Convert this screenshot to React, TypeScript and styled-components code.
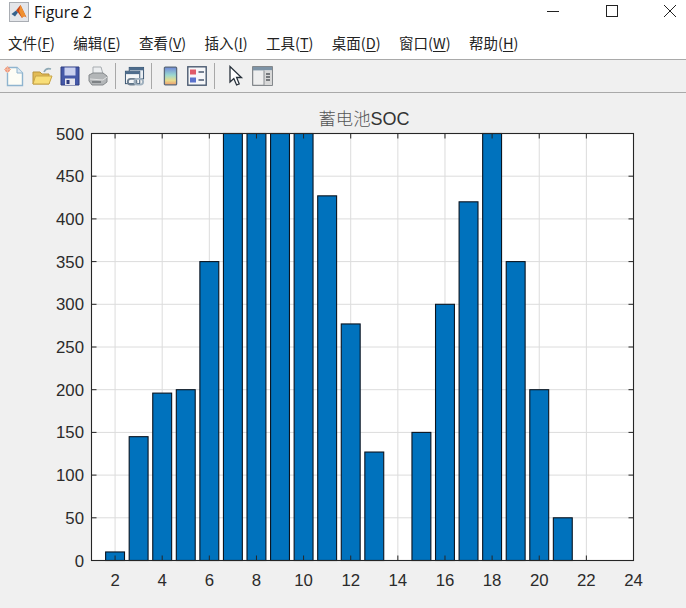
import React from "react";
import styled, { createGlobalStyle } from "styled-components";

const Global = createGlobalStyle`
  html, body { margin: 0; padding: 0; background: #f0f0f0; }
  #root { width: 686px; height: 608px; overflow: hidden; }
`;

const Window = styled.div`
  width: 686px;
  height: 608px;
  display: flex;
  flex-direction: column;
  background: #f0f0f0;
  font-family: "Noto Sans CJK SC", "Liberation Sans", sans-serif;
  color: #1a1a1a;
`;

const TitleBar = styled.div`
  height: 24px;
  flex: none;
  display: flex;
  align-items: center;
  background: #fff;
  padding: 0 10px 4px 9px;
`;

const TitleText = styled.span`
  margin-left: 5px;
  font: 15.5px "Open Sans", sans-serif;
  color: #111;
  flex: 1;
`;

const WinButton = styled.button`
  width: 12px;
  height: 12px;
  padding: 0;
  margin: 0 0 2px 46.5px;
  border: 0;
  background: none;
  display: flex;
  align-items: center;
  justify-content: center;
`;

const MenuBar = styled.div`
  height: 30px;
  flex: none;
  display: flex;
  align-items: center;
  gap: 18.4px;
  padding: 0 0 1px 8px;
  background: #fff;
  border-bottom: 1px solid #a9a9a9;
`;

const MenuItem = styled.span`
  font-size: 14.5px;
  line-height: 20px;
  color: #222;
  white-space: nowrap;
  u { text-underline-offset: 2px; }
`;

const ToolBar = styled.div`
  height: 32px;
  flex: none;
  display: flex;
  align-items: center;
  padding-left: 3px;
  background: #f0f0f0;
  border-bottom: 1px solid #a9a9a9;
`;

const ToolIcon = styled.span<{ $w?: number; $ml?: number }>`
  width: ${(p) => p.$w ?? 22}px;
  height: 24px;
  margin-left: ${(p) => p.$ml ?? 6}px;
  flex: none;
  display: flex;
  align-items: center;
  justify-content: center;
`;

const Sep = styled.span<{ $ml: number }>`
  width: 1px;
  height: 26px;
  margin-left: ${(p) => p.$ml}px;
  background: #a8a8a8;
  flex: none;
`;

const Figure = styled.div`
  flex: 1;
  min-height: 0;
  background: #f0f0f0;
`;

const ChartSvg = styled.svg`
  display: block;
`;

const TickLabel = styled.text`
  font: 16.8px "Liberation Sans", sans-serif;
  fill: #2b2b2b;
`;

const ChartTitle = styled.text`
  font: 18px "Liberation Sans", "Noto Sans CJK SC", sans-serif;
  fill: #333;
`;

const CjkSpan = styled.tspan`
  font: 300 17.3px "Noto Sans CJK SC", sans-serif;
  fill: #555;
`;

const menus = [
  ["文件", "F"],
  ["编辑", "E"],
  ["查看", "V"],
  ["插入", "I"],
  ["工具", "T"],
  ["桌面", "D"],
  ["窗口", "W"],
  ["帮助", "H"],
];

const values = [10, 145, 196, 200, 350, 500, 500, 500, 500, 427, 277, 127, 0, 150, 300, 420, 500, 350, 200, 50];

// plot area, in svg coordinates (the svg starts under the toolbar)
const TOP_OFFSET = 93;
const left = 91.5;
const right = 633.5;
const top = 133.5 - TOP_OFFSET;
const bottom = 560.5 - TOP_OFFSET;
const xAt = (v: number) => left + ((v - 1) / 23) * (right - left);
const yAt = (v: number) => bottom - (v / 500) * (bottom - top);
const xTicks = [2, 4, 6, 8, 10, 12, 14, 16, 18, 20, 22, 24];
const yTicks = [0, 50, 100, 150, 200, 250, 300, 350, 400, 450, 500];

const Chart = () => (
  <ChartSvg width={686} height={515} viewBox="0 0 686 515">
    <ChartTitle x={364} y={32} textAnchor="middle">
      <CjkSpan>蓄电池</CjkSpan>SOC
    </ChartTitle>
    <rect x={left} y={top} width={right - left} height={bottom - top} fill="#fff" />
    {xTicks.map((t) => (
      <line key={t} x1={xAt(t)} x2={xAt(t)} y1={top} y2={bottom} stroke="#dcdcdc" />
    ))}
    {yTicks.map((t) => (
      <line key={t} x1={left} x2={right} y1={yAt(t)} y2={yAt(t)} stroke="#dcdcdc" />
    ))}
    {values.map((v, i) =>
      v > 0 ? (
        <rect
          key={i}
          x={xAt(i + 2) - 9.45}
          y={yAt(v)}
          width={18.9}
          height={bottom - yAt(v)}
          fill="#0072bd"
          stroke="#0a1420"
          strokeWidth={1.1}
        />
      ) : null
    )}
    {xTicks.map((t) => (
      <g key={t} stroke="#262626">
        <line x1={xAt(t)} x2={xAt(t)} y1={bottom} y2={bottom - 5} />
        <line x1={xAt(t)} x2={xAt(t)} y1={top} y2={top + 5} />
      </g>
    ))}
    {yTicks.map((t) => (
      <g key={t} stroke="#262626">
        <line x1={left} x2={left + 5} y1={yAt(t)} y2={yAt(t)} />
        <line x1={right} x2={right - 5} y1={yAt(t)} y2={yAt(t)} />
      </g>
    ))}
    <rect x={left} y={top} width={right - left} height={bottom - top} fill="none" stroke="#262626" strokeWidth={1.1} />
    {xTicks.map((t) => (
      <TickLabel key={t} x={xAt(t)} y={bottom + 25} textAnchor="middle">
        {t}
      </TickLabel>
    ))}
    {yTicks.map((t) => (
      <TickLabel key={t} x={84} y={yAt(t) + 6} textAnchor="end">
        {t}
      </TickLabel>
    ))}
  </ChartSvg>
);

const MatlabLogo = () => (
  <svg width="20" height="20" viewBox="0 0 20 20">
    <rect x="0.5" y="0.5" width="19" height="19" fill="#e4e6ea" stroke="#a9adb3" />
    <path d="M2.5 12 L7 8.5 L9 10.5 L6 14.5 Z" fill="#35618c" />
    <path d="M7 8.5 L11.5 3 Q14 8 17.5 15.5 Q14.5 13 13 16 L9 10.5 Z" fill="#c9481a" />
    <path d="M11.5 3 L10 9 L13 16 Q14.5 13 17.5 15.5 Q14 8 11.5 3 Z" fill="#ef9030" />
  </svg>
);

const NewIcon = () => (
  <svg width="22" height="22" viewBox="0 0 22 22">
    <path d="M4.5 2.5 H14 L19.5 8 V20.5 H4.5 Z" fill="#fdfdf6" stroke="#8fb4cf" strokeWidth="1.4" />
    <path d="M14 2.5 V8 H19.5" fill="#dfeaf2" stroke="#8fb4cf" />
    <circle cx="4.5" cy="4.5" r="2.6" fill="#ef9b7f" />
    <path d="M1 4.5 H8 M4.5 1 V8" stroke="#f4b79e" />
  </svg>
);

const OpenIcon = () => (
  <svg width="22" height="22" viewBox="0 0 22 22">
    <path d="M2 7 H9 L11 9 H18 V19 H2 Z" fill="#e2bb55" stroke="#b7933c" />
    <path d="M2 19 L4.5 11 H21 L18 19 Z" fill="#f8de78" stroke="#c9a548" />
    <path d="M13 7 Q15 2.5 20 4" fill="none" stroke="#8fa9b5" strokeWidth="1.6" />
  </svg>
);

const SaveIcon = () => (
  <svg width="20" height="20" viewBox="0 0 20 20">
    <path d="M1 1 H19 V19 H1 Z" fill="#4458a8" stroke="#2f3c80" />
    <rect x="4.5" y="1.5" width="11" height="8" fill="#c9d0ef" />
    <rect x="5" y="12.5" width="10" height="6.5" fill="#e6e6ee" />
    <rect x="6.5" y="14" width="3" height="4" fill="#2f3c80" />
  </svg>
);

const PrintIcon = () => (
  <svg width="20" height="20" viewBox="0 0 20 20">
    <path d="M5 1 H13 L15 8 H5 Z" fill="#eceef0" stroke="#a7acb0" />
    <path d="M1 9 L5 7 H15 L19 10 V16 L15 19 H4 L1 15 Z" fill="#b3b6b8" stroke="#85898c" />
    <path d="M2 13 L15 14 L19 11" fill="none" stroke="#e2e3e4" />
    <rect x="4" y="15" width="9" height="2" fill="#7e8285" />
  </svg>
);

const LinkIcon = () => (
  <svg width="21" height="21" viewBox="0 0 22 22">
    <rect x="5.5" y="1.5" width="15" height="12" fill="#e9eef3" stroke="#37536f" />
    <rect x="5.5" y="1.5" width="15" height="3" fill="#4d6c8c" />
    <rect x="1.5" y="5.5" width="15" height="13" fill="#f4f6f8" stroke="#37536f" />
    <rect x="1.5" y="5.5" width="15" height="3" fill="#4d6c8c" />
    <rect x="4" y="13.5" width="9" height="6" rx="3" fill="none" stroke="#6d7f90" strokeWidth="2" />
    <rect x="11" y="13.5" width="9" height="6" rx="3" fill="none" stroke="#9fb0be" strokeWidth="2" />
  </svg>
);

const ColorbarIcon = () => (
  <svg width="15" height="22" viewBox="0 0 16 22">
    <defs>
      <linearGradient id="cb" x1="0" y1="0" x2="0" y2="1">
        <stop offset="0" stopColor="#6f86d8" />
        <stop offset="0.45" stopColor="#9ad8d0" />
        <stop offset="0.75" stopColor="#e8dc8c" />
        <stop offset="1" stopColor="#ee9a6c" />
      </linearGradient>
    </defs>
    <rect x="1.5" y="1.5" width="13" height="19" rx="1" fill="url(#cb)" stroke="#5a6a7c" strokeWidth="1.4" />
  </svg>
);

const LegendIcon = () => (
  <svg width="20" height="20" viewBox="0 0 20 20">
    <rect x="0.8" y="0.8" width="18.4" height="18.4" fill="#f6f7f9" stroke="#4a5a70" strokeWidth="1.4" />
    <rect x="3" y="3.5" width="6" height="5" fill="#df5a68" />
    <rect x="3" y="11.5" width="6" height="5" fill="#5b72cc" />
    <path d="M11.5 6 H17 M11.5 14 H17" stroke="#4a5a70" strokeWidth="1.6" />
  </svg>
);

const CursorIcon = () => (
  <svg width="16" height="22" viewBox="0 0 16 22">
    <path d="M2 1.5 V17 L5.8 13.5 L8.6 20 L11.2 18.8 L8.6 12.5 H13.5 Z" fill="#fff" stroke="#27303a" strokeWidth="1.3" />
  </svg>
);

const PanelIcon = () => (
  <svg width="21" height="20" viewBox="0 0 21 20">
    <rect x="0.7" y="0.7" width="19.6" height="18.6" fill="#eeeeee" stroke="#6a6f74" />
    <rect x="1" y="1" width="19" height="3.4" fill="#7d93a6" />
    <rect x="12" y="4.4" width="8" height="14.6" fill="#d8d8d8" />
    <path d="M14 8 H18 M14 11 H18 M14 14 H18" stroke="#55595d" strokeWidth="1.3" />
    <path d="M12 4.4 V19" stroke="#8a8e92" />
  </svg>
);

export default function App() {
  return (
    <Window>
      <Global />
      <TitleBar>
        <MatlabLogo />
        <TitleText>Figure 2</TitleText>
        <WinButton aria-label="minimize">
          <svg width="12" height="12" viewBox="0 0 12 12">
            <path d="M0 6.5 H12" stroke="#222" />
          </svg>
        </WinButton>
        <WinButton aria-label="maximize">
          <svg width="12" height="12" viewBox="0 0 12 12">
            <rect x="0.5" y="0.5" width="11" height="11" fill="none" stroke="#222" />
          </svg>
        </WinButton>
        <WinButton aria-label="close">
          <svg width="12" height="12" viewBox="0 0 12 12">
            <path d="M0 0 L12 12 M12 0 L0 12" stroke="#222" />
          </svg>
        </WinButton>
      </TitleBar>
      <MenuBar>
        {menus.map(([name, key]) => (
          <MenuItem key={key}>
            {name}(<u>{key}</u>)
          </MenuItem>
        ))}
      </MenuBar>
      <ToolBar>
        <ToolIcon $ml={0}><NewIcon /></ToolIcon>
        <ToolIcon><OpenIcon /></ToolIcon>
        <ToolIcon><SaveIcon /></ToolIcon>
        <ToolIcon><PrintIcon /></ToolIcon>
        <Sep $ml={6} />
        <ToolIcon $ml={7}><LinkIcon /></ToolIcon>
        <Sep $ml={6} />
        <ToolIcon $ml={7}><ColorbarIcon /></ToolIcon>
        <ToolIcon $ml={5}><LegendIcon /></ToolIcon>
        <Sep $ml={6} />
        <ToolIcon $ml={10}><CursorIcon /></ToolIcon>
        <ToolIcon $ml={4}><PanelIcon /></ToolIcon>
      </ToolBar>
      <Figure>
        <Chart />
      </Figure>
    </Window>
  );
}
